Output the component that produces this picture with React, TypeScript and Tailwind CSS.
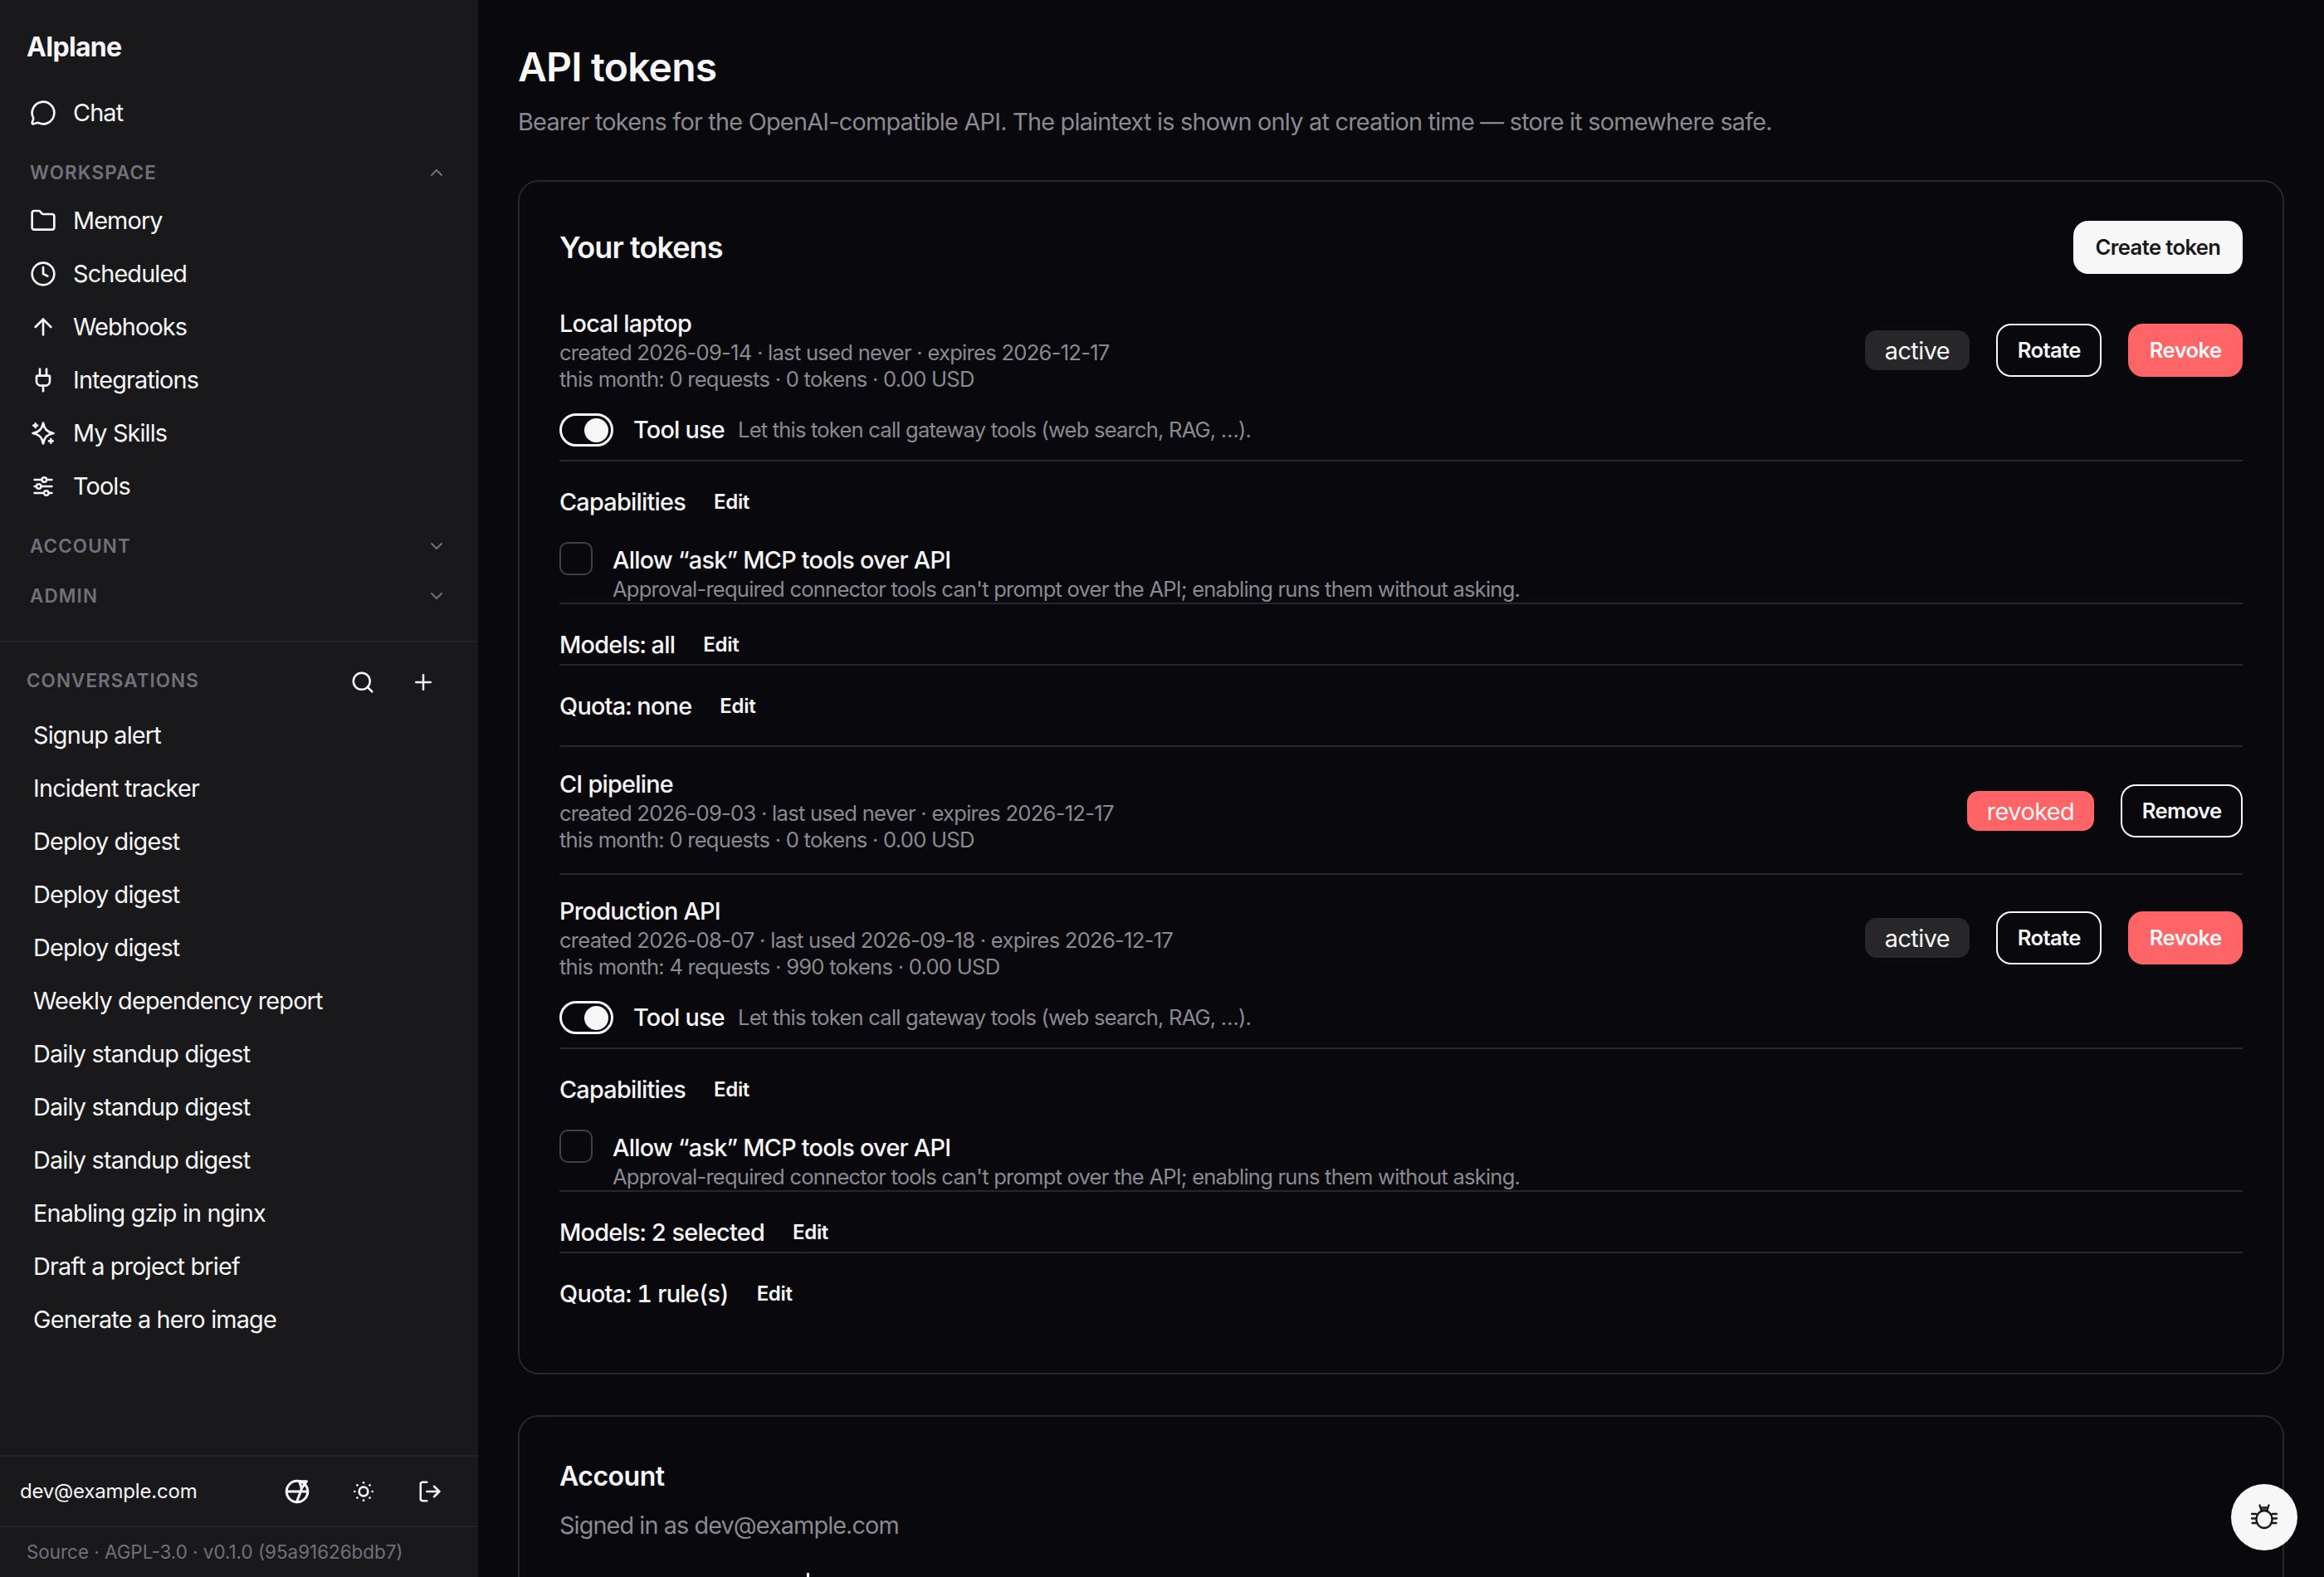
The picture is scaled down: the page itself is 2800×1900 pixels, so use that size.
import { ChevronDown, ChevronUp, Clock, Folder, LogOut, MessageCircle, Plug, Plus, Search, SunDim, ArrowUp } from 'lucide-react';

const SkillsIcon = () => (
  <svg viewBox="0 0 32 32" className="w-[32px] h-[32px]" fill="none" stroke="currentColor" strokeWidth="2.700" strokeLinecap="round" strokeLinejoin="round">
    <path d="M16 3.500c1 6.600 4.900 11.500 12.500 12.500-7.600 1-11.500 5.900-12.500 12.500-1-6.600-4.900-11.500-12.500-12.500 7.600-1 11.500-5.900 12.500-12.500z" />
    <path d="M6.700 4.400v4.600M4.400 6.700h4.600M25.300 23v4.600M23 25.300h4.600" />
  </svg>
);

const ToolsIcon = () => (
  <svg viewBox="0 0 32 32" className="w-[32px] h-[32px]" fill="none" stroke="currentColor" strokeWidth="2.400" strokeLinecap="round">
    <path d="M5.500 8h21M5.500 16h21M5.500 24h21" />
    <circle cx="17.300" cy="8" r="2.800" fill="#19191c" />
    <circle cx="10.700" cy="16" r="2.800" fill="#19191c" />
    <circle cx="19.700" cy="24" r="2.800" fill="#19191c" />
  </svg>
);

const LangIcon = () => (
  <svg viewBox="0 0 24 24" className="w-[36px] h-[36px]" fill="none" stroke="currentColor" strokeWidth="2" strokeLinecap="round" strokeLinejoin="round">
    <circle cx="12" cy="12" r="8.500" />
    <path d="M3.500 12h17M13.800 3.800h5.800l-4 5.700c-1.100 3.500-2.600 7.500-4 11M13.800 3.800l1.800 5.700" />
  </svg>
);

const BugIcon = () => (
  <svg viewBox="0 0 36 36" className="w-[36px] h-[36px]" fill="none" stroke="currentColor" strokeWidth="2.300" strokeLinecap="round" strokeLinejoin="round">
    <ellipse cx="18" cy="20.500" rx="9.500" ry="10.500" />
    <path d="M12.500 3.500l1.800 5.500M23.500 3.500l-1.800 5.500M13.500 6.500h9M14.300 9.500h7.400" />
    <path d="M3 14h5.500M3 19.500h5.500M3.500 25h6M27.500 14h5.500M27.500 19.500h5.500M26.500 25h6" />
  </svg>
);

const navItems = [
  { label: 'Memory', icon: <Folder size={32} /> },
  { label: 'Scheduled', icon: <Clock size={32} /> },
  { label: 'Webhooks', icon: <ArrowUp size={32} /> },
  { label: 'Integrations', icon: <Plug size={32} /> },
  { label: 'My Skills', icon: <SkillsIcon /> },
  { label: 'Tools', icon: <ToolsIcon /> },
];

const conversations = [
  'Signup alert',
  'Incident tracker',
  'Deploy digest',
  'Deploy digest',
  'Deploy digest',
  'Weekly dependency report',
  'Daily standup digest',
  'Daily standup digest',
  'Daily standup digest',
  'Enabling gzip in nginx',
  'Draft a project brief',
  'Generate a hero image',
];

function NavRow({ label, icon }: { label: string; icon: React.ReactNode }) {
  return (
    <div className="h-[64px] flex items-center gap-[20px] pl-[36px] text-[28.8px] tracking-[-0.85px] text-[#f7f7f8]">
      {icon}
      <span>{label}</span>
    </div>
  );
}

function SectionHead({ label, open }: { label: string; open?: boolean }) {
  return (
    <div className="h-[60px] flex items-center justify-between pl-[36px] pr-[38px] text-[22.4px] font-semibold tracking-[1.15px] text-[#71717a]">
      <span>{label}</span>
      {open ? <ChevronUp size={24} /> : <ChevronDown size={24} />}
    </div>
  );
}

function Sidebar() {
  return (
    <aside className="w-[576px] h-full shrink-0 flex flex-col bg-[#19191c] overflow-hidden">
      <div className="h-[104px] pl-[32px] pt-[33px] text-[32px] leading-[48px] font-bold text-[#f7f7f8] tracking-[-0.7px]">AIplane</div>
      <NavRow label="Chat" icon={<MessageCircle size={32} />} />
      <div className="mt-[10px]">
        <SectionHead label="WORKSPACE" open />
      </div>
      <div className="mt-[-4px]">
        {navItems.map((n) => (
          <NavRow key={n.label} label={n.label} icon={n.icon} />
        ))}
      </div>
      <div className="mt-[10px]">
        <SectionHead label="ACCOUNT" />
        <SectionHead label="ADMIN" />
      </div>
      <div className="mt-[24px] border-t-2 border-[#232326]" />
      <div className="h-[92px] flex items-center pl-[32px] pr-[51px] text-[22.4px] font-semibold tracking-[1.1px] text-[#71717a]">
        <span className="flex-1">CONVERSATIONS</span>
        <span className="text-[#f7f7f8] flex items-center gap-[43px] mt-[4px]">
          <Search size={30} />
          <Plus size={30} />
        </span>
      </div>
      <div className="flex-1 mt-[-12px]">
        {conversations.map((c, i) => (
          <div key={i} className="h-[64px] flex items-center pl-[40px] text-[28.8px] tracking-[-0.8px] text-[#f7f7f8]">
            {c}
          </div>
        ))}
      </div>
      <div className="h-[85px] border-t-2 border-[#232326] flex items-center pl-[24px] pr-[40px] text-[24px] tracking-[-0.2px] text-[#f7f7f8]">
        <span className="flex-1">dev@example.com</span>
        <span className="flex items-center gap-[44px]">
          <span className="w-[36px] flex justify-center"><LangIcon /></span>
          <span className="w-[36px] flex justify-center"><SunDim size={32} /></span>
          <span className="w-[36px] flex justify-center"><LogOut size={30} /></span>
        </span>
      </div>
      <div className="h-[62px] border-t-2 border-[#232326] flex items-center pl-[32px] text-[22.4px] tracking-normal text-[#71717a]">
        Source · AGPL-3.0 · v0.1.0 (95a91626bdb7)
      </div>
    </aside>
  );
}

function Btn({ children, kind }: { children: string; kind: 'outline' | 'danger' }) {
  const cls =
    kind === 'danger'
      ? 'bg-[#ff6467] border-[#ff6467] text-[#f7f7f8]'
      : 'border-[#f7f7f8] text-[#f7f7f8]';
  return (
    <button className={`h-[64px] px-[23.5px] border-2 rounded-[18px] text-[25.6px] tracking-[-0.6px] font-semibold ${cls}`}>{children}</button>
  );
}

function Badge({ children, danger }: { children: string; danger?: boolean }) {
  return (
    <span className={`h-[48px] px-[24px] pt-[2px] rounded-[14px] flex items-center text-[28.8px] tracking-[-0.5px] text-[#f7f7f8] ${danger ? 'bg-[#ff6467]' : 'bg-[#27272a]'}`}>
      {children}
    </span>
  );
}

function Edit() {
  return <span className="ml-[34px] text-[24px] tracking-[-0.3px] font-semibold text-[#f7f7f8]">Edit</span>;
}

function SubRow({ label, last }: { label: string; last?: boolean }) {
  return (
    <div className={`pt-[30px] ${last ? '' : 'pb-[4px] border-b-2 border-[#27272a]'}`}>
      <div className="h-[38px] flex items-center text-[28.8px] font-medium tabular-nums text-[#f7f7f8]">
        {label}
        <Edit />
      </div>
    </div>
  );
}

function Details({ models, quota }: { models: string; quota: string }) {
  return (
    <div className="pb-[4px]">
      <div className="mt-[25px] pb-[16px] border-b-2 border-[#27272a] flex items-center h-[58px]">
        <span className="w-[65px] h-[40px] rounded-full border-[3px] border-[#f7f7f8] flex items-center justify-end pr-[3px]">
          <span className="w-[29px] h-[29px] rounded-full bg-[#f7f7f8]" />
        </span>
        <span className="ml-[24px] text-[28.8px] font-medium text-[#f7f7f8]">Tool use</span>
        <span className="ml-[16px] text-[25.6px] tracking-[-0.82px] text-[#8a8a90]">Let this token call gateway tools (web search, RAG, …).</span>
      </div>
      <div className="pt-[30px] border-b-2 border-[#27272a]">
        <div className="h-[38px] flex items-center text-[28.8px] font-medium text-[#f7f7f8]">
          Capabilities
          <Edit />
        </div>
        <div className="mt-[29px] flex">
          <span className="w-[40px] h-[40px] rounded-[10px] border-2 border-[#3f3f46] shrink-0" />
          <div className="ml-[24px] pt-[3px]">
            <div className="text-[28.8px] leading-[38px] font-medium text-[#f7f7f8]">Allow “ask” MCP tools over API</div>
            <div className="text-[25.6px] leading-[32px] tracking-[-0.8px] text-[#8a8a90]">
              Approval-required connector tools can't prompt over the API; enabling runs them without asking.
            </div>
          </div>
        </div>
      </div>
      <SubRow label={models} />
      <SubRow label={quota} last />
    </div>
  );
}

function Token({
  name,
  meta,
  usage,
  actions,
  details,
  border,
  top = 'pt-[25px]',
}: {
  name: string;
  meta: string;
  usage: string;
  actions: React.ReactNode;
  details?: React.ReactNode;
  border?: boolean;
  top?: string;
}) {
  return (
    <div className={`${top} pb-[24px] ${border ? 'border-b-2 border-[#27272a]' : ''}`}>
      <div className="flex items-center justify-between">
        <div>
          <div className="text-[28.8px] leading-[38px] font-medium text-[#f7f7f8]">{name}</div>
          <div className="text-[25.6px] leading-[32px] text-[#8a8a90]">{meta}</div>
          <div className="text-[25.6px] leading-[32px] text-[#8a8a90]">{usage}</div>
        </div>
        <div className="flex items-center gap-[32px]">{actions}</div>
      </div>
      {details}
    </div>
  );
}

export default function App() {
  return (
    <div className="w-[2800px] h-[1900px] flex overflow-hidden bg-[#08080d] tracking-[-0.75px] font-['Inter',sans-serif]">
      <Sidebar />
      <main className="flex-1 h-full overflow-hidden pl-[48px] pr-[48px] pt-[51px] relative">
        <h1 className="text-[48px] leading-[60px] font-semibold text-[#f7f7f8] tracking-[-0.8px]">API tokens</h1>
        <p className="mt-[16px] text-[28.8px] leading-[40px] text-[#8a8a90]">
          Bearer tokens for the OpenAI-compatible API. The plaintext is shown only at creation time — store it somewhere safe.
        </p>
        <section className="mt-[50px] border-2 border-[#27272a] rounded-[25px] px-[48px] pt-[47px] pb-[48px]">
          <div className="flex items-center justify-between mb-[16px]">
            <h2 className="text-[36px] font-semibold text-[#f7f7f8] tracking-[-0.9px]">Your tokens</h2>
            <button className="h-[64px] w-[204px] rounded-[18px] bg-[#f7f7f8] text-[#18181b] text-[25.6px] tracking-[-0.6px] font-semibold">Create token</button>
          </div>
          <Token
            border
            name="Local laptop"
            meta="created 2026-09-14 · last used never · expires 2026-12-17"
            usage="this month: 0 requests · 0 tokens · 0.00 USD"
            actions={
              <>
                <Badge>active</Badge>
                <Btn kind="outline">Rotate</Btn>
                <Btn kind="danger">Revoke</Btn>
              </>
            }
            details={<Details models="Models: all" quota="Quota: none" />}
          />
          <Token
            border
            top="pt-[26px]"
            name="CI pipeline"
            meta="created 2026-09-03 · last used never · expires 2026-12-17"
            usage="this month: 0 requests · 0 tokens · 0.00 USD"
            actions={
              <>
                <Badge danger>revoked</Badge>
                <Btn kind="outline">Remove</Btn>
              </>
            }
          />
          <Token
            name="Production API"
            meta="created 2026-08-07 · last used 2026-09-18 · expires 2026-12-17"
            usage="this month: 4 requests · 990 tokens · 0.00 USD"
            actions={
              <>
                <Badge>active</Badge>
                <Btn kind="outline">Rotate</Btn>
                <Btn kind="danger">Revoke</Btn>
              </>
            }
            details={<Details models="Models: 2 selected" quota="Quota: 1 rule(s)" />}
          />
        </section>
        <section className="mt-[49px] border-2 border-[#27272a] rounded-[25px] px-[48px] pt-[49px] h-[400px]">
          <h2 className="text-[32px] leading-[46px] font-semibold text-[#f7f7f8] tracking-[-0.5px]">Account</h2>
          <p className="mt-[16px] text-[28.8px] leading-[40px] tracking-[-0.9px] text-[#8a8a90]">Signed in as dev@example.com</p>
        </section>
        <span className="absolute bottom-0 left-[396px] w-[3px] h-[5px] bg-[#f7f7f8]" />
        <button className="absolute right-[32px] bottom-[32px] w-[80px] h-[80px] rounded-full bg-[#f7f7f8] text-[#18181b] flex items-center justify-center">
          <BugIcon />
        </button>
      </main>
    </div>
  );
}
